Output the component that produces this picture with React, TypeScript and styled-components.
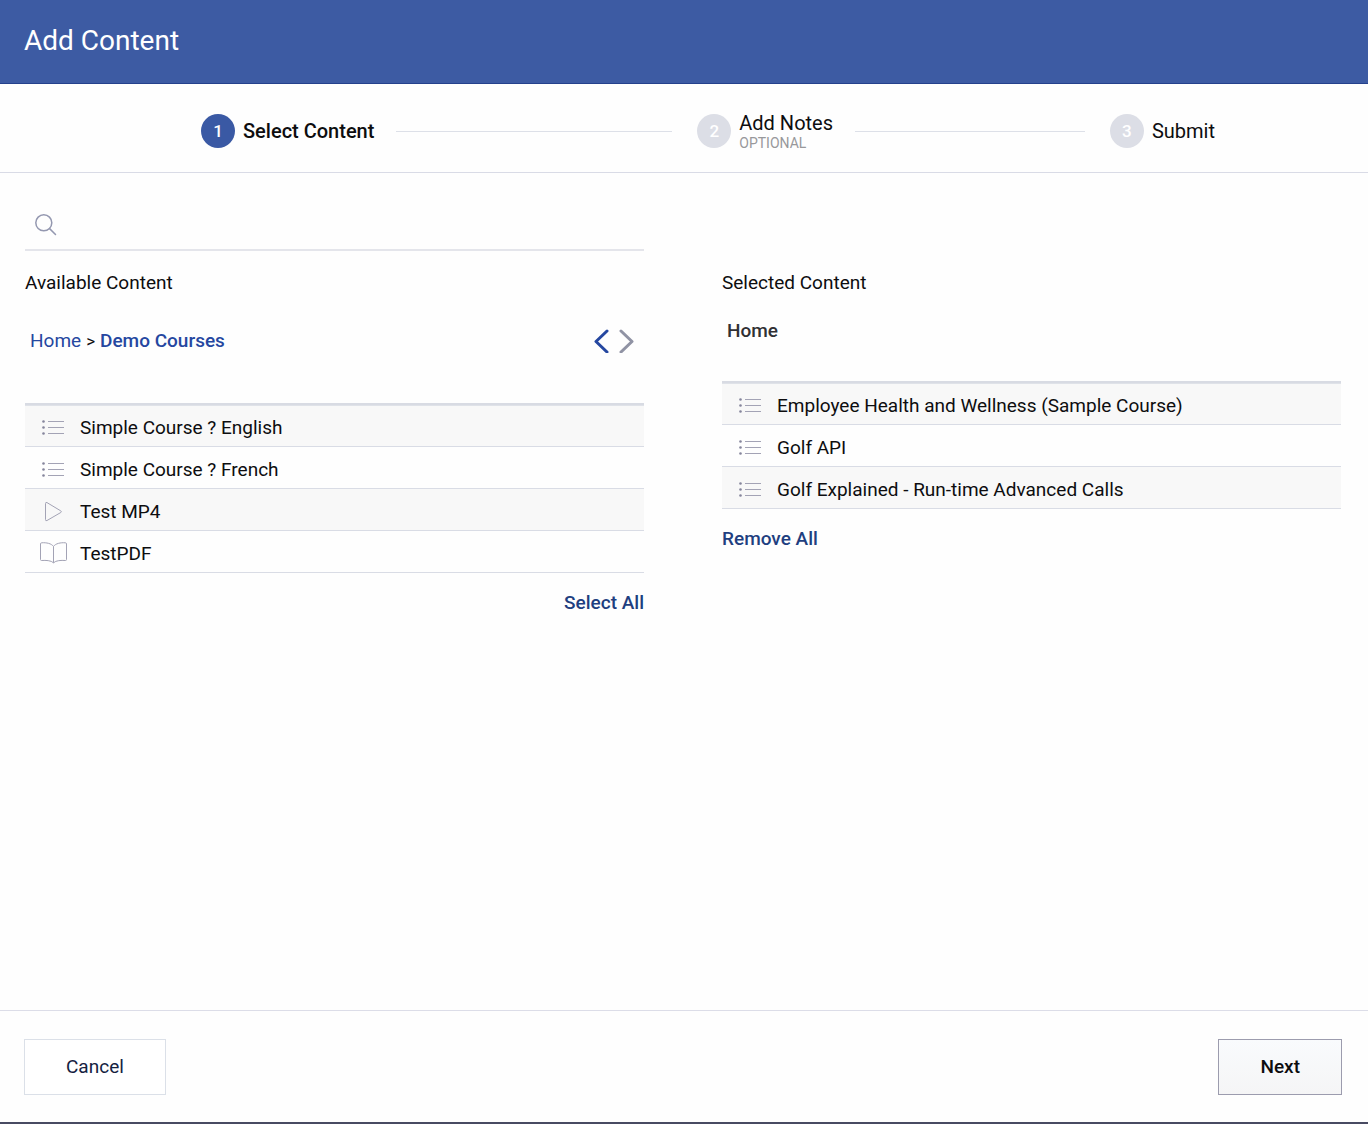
import React from "react";
import styled, { createGlobalStyle } from "styled-components";

const GlobalStyle = createGlobalStyle`
  *, *::before, *::after { box-sizing: border-box; }
  body {
    margin: 0;
    background: #fefefe;
    color: #0d0d0f;
    font: 400 19px/24px Roboto, "Liberation Sans", sans-serif;
  }
  button, input { font: inherit; color: inherit; }
`;

const Page = styled.div`
  display: flex;
  flex-direction: column;
  min-height: 100vh;
  border-bottom: 2px solid #484b62;
`;

const TitleBar = styled.header`
  padding: 25px 24px 26px;
  background: #3d5ba3;
  border-bottom: 1px solid #25418c;
  color: #fff;
`;

const Title = styled.h1`
  margin: 0;
  font-size: 28px;
  line-height: 32px;
  font-weight: 400;
`;

const Stepper = styled.ol`
  display: flex;
  align-items: center;
  margin: 0;
  padding: 27px 153px 21px 201px;
  list-style: none;
  border-bottom: 1px solid #d9dbe6;
  font-size: 20px;
`;

const Step = styled.li`
  display: flex;
  align-items: center;
  gap: 8px;
`;

const StepNumber = styled.span<{ $active?: boolean }>`
  display: grid;
  place-items: center;
  width: 34px;
  height: 34px;
  border-radius: 50%;
  background: ${(p) => (p.$active ? "#3a59a4" : "#dcdee6")};
  color: #fff;
  font-size: 17px;
  font-weight: 500;
`;

const StepLabel = styled.span<{ $active?: boolean }>`
  display: flex;
  flex-direction: column;
  white-space: nowrap;
  font-weight: ${(p) => (p.$active ? 500 : 400)};
`;

const StepHint = styled.small`
  color: #98989b;
  font-size: 14px;
  line-height: 16px;
`;

const Connector = styled.li<{ $grow: number }>`
  flex: ${(p) => p.$grow} 1 0;
  height: 1px;
  margin: 0 25px 0 22px;
  background: #dde0e8;
`;

const Main = styled.main`
  flex: 1;
  display: grid;
  grid-template-columns: 1fr 1fr;
  gap: 78px;
  padding: 26px 27px 26px 25px;
`;

const Column = styled.section`
  display: flex;
  flex-direction: column;
`;

const SelectedColumn = styled(Column)`
  padding-top: 52px;
`;

const SearchField = styled.label`
  display: flex;
  align-items: center;
  gap: 12px;
  height: 52px;
  padding: 2px 0 0 10px;
  border-bottom: 2px solid #e4e5eb;
`;

const SearchInput = styled.input`
  flex: 1;
  height: 36px;
  border: 0;
  outline: 0;
  background: transparent;
`;

const Heading = styled.h2`
  margin: 20px 0 0;
  font: inherit;
`;

const Trail = styled.nav<{ $above: number; $below: number }>`
  display: flex;
  align-items: center;
  gap: 5px;
  height: 24px;
  margin: ${(p) => p.$above}px 0 ${(p) => p.$below}px;
  padding: 0 10px 0 5px;
`;

const Crumb = styled.a<{ $current?: boolean }>`
  color: #2547a0;
  font-weight: ${(p) => (p.$current ? 500 : 400)};
  text-decoration: none;
`;

const RootCrumb = styled.span`
  color: #303034;
  font-weight: 500;
`;

const Separator = styled.span`
  font-size: 17px;
`;

const Arrows = styled.span`
  display: flex;
  gap: 10px;
  margin-left: auto;
`;

const ArrowButton = styled.button<{ $muted?: boolean }>`
  display: flex;
  padding: 0;
  border: 0;
  background: none;
  color: ${(p) => (p.$muted ? "#9093a4" : "#2547a0")};
`;

const List = styled.ul`
  margin: 0;
  padding: 0;
  list-style: none;
  border-top: 2px solid #d8dbe3;
`;

const Row = styled.li`
  display: flex;
  align-items: center;
  gap: 12px;
  height: 42px;
  padding: 5px 14px 0;
  border-bottom: 1px solid #d9dce5;
  &:nth-child(odd) { background: #f8f8f8; }
  &:first-child { box-shadow: inset 0 1px #dfe2e8; }
`;

const RowIcon = styled.svg`
  flex: none;
  width: 29px;
  height: 24px;
  fill: none;
  stroke: #a3a3b5;
`;

const TextButton = styled.button<{ $end?: boolean }>`
  align-self: ${(p) => (p.$end ? "flex-end" : "flex-start")};
  margin: 18px 0 0;
  padding: 0;
  border: 0;
  background: none;
  color: #1f3f80;
  font-weight: 500;
`;

const Footer = styled.footer`
  display: flex;
  justify-content: space-between;
  padding: 28px 26px 27px 24px;
  border-top: 1px solid #dcdde8;
`;

const ActionButton = styled.button<{ $primary?: boolean }>`
  height: 56px;
  padding: 0 41px;
  border: 1px solid ${(p) => (p.$primary ? "#9c9cae" : "#dbe0e8")};
  background: ${(p) => (p.$primary ? "linear-gradient(#f9fbfd, #f5f5f6)" : "#fff")};
  color: ${(p) => (p.$primary ? "#0d0d0f" : "#14213f")};
  font-weight: ${(p) => (p.$primary ? 500 : 400)};
`;

type Kind = "course" | "video" | "document";

function KindIcon({ kind }: { kind: Kind }) {
  return (
    <RowIcon viewBox="0 0 29 24" aria-hidden="true">
      {kind === "course" && (
        <>
          <path d="M9 5.5H25M9 11.5H25M9 17.5H25" />
          <g fill="#85859c" stroke="none">
            <circle cx="4.5" cy="5.5" r="1.3" />
            <circle cx="4.5" cy="11.5" r="1.3" />
            <circle cx="4.5" cy="17.5" r="1.3" />
          </g>
        </>
      )}
      {kind === "video" && (
        <path d="M6.5 3.6V19.6Q6.5 21.3 8 20.5L21.8 12.5Q23 11.7 21.8 10.9L8 2.6Q6.5 1.9 6.5 3.6Z" />
      )}
      {kind === "document" && (
        <path d="M14.5 4.5C12.5 1.5 7.5 0.4 2.5 0.8Q1.5 0.9 1.5 2V17.5Q1.5 18.5 2.5 18.5C7 18.2 12 18.4 14.5 20.8C17 18.4 22 18.2 26.5 18.5Q27.5 18.5 27.5 17.5V2Q27.5 0.9 26.5 0.8C21.5 0.4 16.5 1.5 14.5 4.5V20.8" />
      )}
    </RowIcon>
  );
}

const available: { kind: Kind; name: string }[] = [
  { kind: "course", name: "Simple Course ? English" },
  { kind: "course", name: "Simple Course ? French" },
  { kind: "video", name: "Test MP4" },
  { kind: "document", name: "TestPDF" },
];

const selected: { kind: Kind; name: string }[] = [
  { kind: "course", name: "Employee Health and Wellness (Sample Course)" },
  { kind: "course", name: "Golf API" },
  { kind: "course", name: "Golf Explained - Run-time Advanced Calls" },
];

function ContentList({ items }: { items: { kind: Kind; name: string }[] }) {
  return (
    <List>
      {items.map((item) => (
        <Row key={item.name}>
          <KindIcon kind={item.kind} />
          <span>{item.name}</span>
        </Row>
      ))}
    </List>
  );
}

function Chevron({ d }: { d: string }) {
  return (
    <svg width="15" height="24" viewBox="0 0 15 24" fill="none" stroke="currentColor" strokeWidth="3" strokeLinecap="round" strokeLinejoin="round" aria-hidden="true">
      <path d={d} />
    </svg>
  );
}

export default function App() {
  return (
    <>
      <GlobalStyle />
      <Page>
        <TitleBar>
          <Title>Add Content</Title>
        </TitleBar>
        <Stepper>
          <Step aria-current="step">
            <StepNumber $active>1</StepNumber>
            <StepLabel $active>Select Content</StepLabel>
          </Step>
          <Connector $grow={6} aria-hidden="true" />
          <Step>
            <StepNumber>2</StepNumber>
            <StepLabel>
              Add Notes
              <StepHint>OPTIONAL</StepHint>
            </StepLabel>
          </Step>
          <Connector $grow={5} aria-hidden="true" />
          <Step>
            <StepNumber>3</StepNumber>
            <StepLabel>Submit</StepLabel>
          </Step>
        </Stepper>
        <Main>
          <Column>
            <SearchField>
              <svg width="22" height="22" viewBox="0 0 22 22" fill="none" stroke="#9498b0" strokeWidth="1.5" strokeLinecap="round" aria-hidden="true">
                <circle cx="8.8" cy="8.8" r="8" />
                <path d="M14.6 14.6L20.5 20.5" />
              </svg>
              <SearchInput type="search" aria-label="Search content" />
            </SearchField>
            <Heading>Available Content</Heading>
            <Trail $above={34} $below={50} aria-label="Breadcrumb">
              <Crumb href="#home">Home</Crumb>
              <Separator>&gt;</Separator>
              <Crumb href="#demo-courses" $current>Demo Courses</Crumb>
              <Arrows>
                <ArrowButton type="button" aria-label="Back">
                  <Chevron d="M13 2L2 12.5L13 23" />
                </ArrowButton>
                <ArrowButton type="button" aria-label="Forward" $muted>
                  <Chevron d="M2 2L13 12.5L2 23" />
                </ArrowButton>
              </Arrows>
            </Trail>
            <ContentList items={available} />
            <TextButton type="button" $end>Select All</TextButton>
          </Column>
          <SelectedColumn>
            <Heading>Selected Content</Heading>
            <Trail $above={24} $below={38} aria-label="Selected location">
              <RootCrumb>Home</RootCrumb>
            </Trail>
            <ContentList items={selected} />
            <TextButton type="button">Remove All</TextButton>
          </SelectedColumn>
        </Main>
        <Footer>
          <ActionButton type="button">Cancel</ActionButton>
          <ActionButton type="button" $primary>Next</ActionButton>
        </Footer>
      </Page>
    </>
  );
}
